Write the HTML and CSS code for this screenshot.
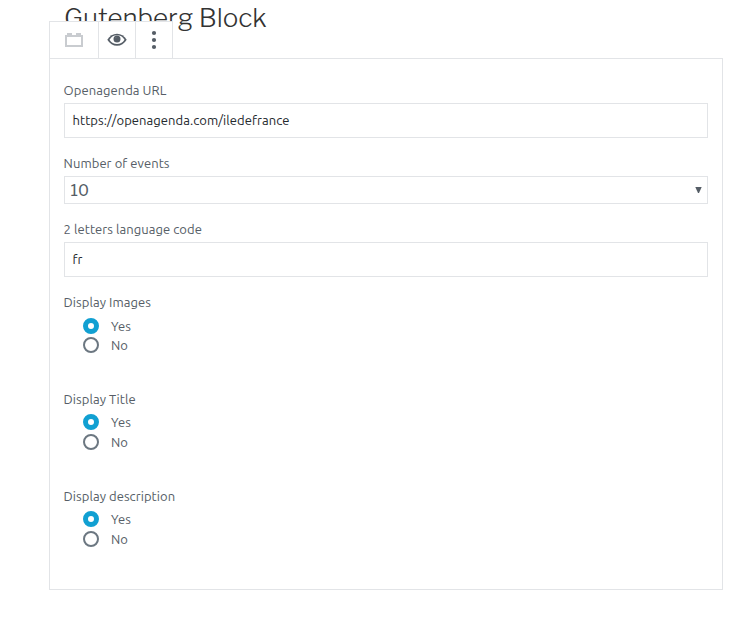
FILE: index.html
```html
<!DOCTYPE html>
<html lang="en">
<head>
<meta charset="utf-8">
<title>Gutenberg Block</title>
<link rel="stylesheet" href="styles.css">
</head>
<body>
<header class="heading"><h1>Gutenberg Block</h1></header>
<main class="block">
  <div class="toolbar">
    <span class="tool tool-block"><svg width="20" height="20" viewBox="0 0 20 20"><path d="M1 5h2V3h5v2h4V3h5v2h2v12H1V5zM3 7v8h14V7z" fill="#c9ccd0" fill-rule="evenodd"/></svg></span>
    <span class="tool"><svg width="20" height="20" viewBox="0 0 20 20"><path d="M.3 9.700Q4 3.700 10 3.700T19.700 9.700Q16 15.700 10 15.700T.3 9.700z" fill="#555d66"/><path d="M2.500 9.700Q5.300 5.300 10 5.300T17.500 9.700Q14.700 14.100 10 14.100T2.500 9.700z" fill="#fff"/><circle cx="10" cy="8.900" r="3.500" fill="#555d66"/><circle cx="8.900" cy="7.600" r=".8" fill="#69717a"/></svg></span>
    <span class="tool"><svg width="20" height="20" viewBox="0 0 20 20" fill="#555d66"><circle cx="10" cy="3" r="2.100"/><circle cx="10" cy="10" r="2.100"/><circle cx="10" cy="17" r="2.100"/></svg></span>
  </div>
  <div class="field">
    <div class="label">Openagenda URL</div>
    <div class="input">https://openagenda.com/iledefrance</div>
  </div>
  <div class="field">
    <div class="label">Number of events</div>
    <div class="select"><span>10</span><svg width="7" height="6" viewBox="0 0 7 6"><path d="M.3 0h6.400L4 6H3z" fill="#555d66"/></svg></div>
  </div>
  <div class="field">
    <div class="label">2 letters language code</div>
    <div class="input">fr</div>
  </div>
  <div class="group group-first">
    <div class="label">Display Images</div>
    <div class="option"><i class="radio on"></i><span>Yes</span></div>
    <div class="option"><i class="radio"></i><span>No</span></div>
  </div>
  <div class="group">
    <div class="label">Display Title</div>
    <div class="option"><i class="radio on"></i><span>Yes</span></div>
    <div class="option"><i class="radio"></i><span>No</span></div>
  </div>
  <div class="group">
    <div class="label">Display description</div>
    <div class="option"><i class="radio on"></i><span>Yes</span></div>
    <div class="option"><i class="radio"></i><span>No</span></div>
  </div>
</main>
</body>
</html>
```
FILE: styles.css
```css
* { box-sizing: border-box; }
body { margin: 0; background: #fff; color: #555d66; font: 13px/18px Ubuntu, "Noto Sans", sans-serif; letter-spacing: .06px; }
.heading { height: 58px; padding-left: 64px; }
h1 { margin: 0; font: 300 26px/35px "Libre Franklin", Inter, sans-serif; letter-spacing: -.03px; color: #333; white-space: nowrap; }
.block { position: relative; width: 674px; height: 532px; margin-left: 49px; padding: 22px 14px 0; border: 1px solid #e2e4e7; }
.toolbar { position: absolute; left: -1px; top: -38px; display: flex; height: 38px; background: #fff; border: 1px solid #e2e4e7; }
.tool { display: flex; width: 37px; align-items: center; justify-content: center; border-right: 1px solid #e2e4e7; }
.tool:last-child { width: 36px; border-right: 0; }
.tool-block { width: 49px; }
.field { margin-bottom: 16px; }
.label { height: 18px; margin-bottom: 4px; margin-left: -.4px; white-space: nowrap; }
.input { display: flex; align-items: center; height: 35px; padding: 0 7.5px 1px; border: 1px solid #e2e4e7; color: #23282d; }
.select { display: flex; align-items: center; justify-content: space-between; height: 28px; padding: 0 5px 0 5.600px; border: 1px solid #e2e4e7; font: 16px "Libre Franklin", sans-serif; }
.group { height: 97px; }
.group .label { margin-bottom: 4px; }
.group-first .label { margin-bottom: 5px; }
.option { display: flex; align-items: center; height: 20px; padding-left: 19px; gap: 12px; }
.group-first .option { height: 19px; }
.radio { width: 16px; height: 16px; border: 2px solid #6c7781; border-radius: 50%; }
.radio.on { border: 5px solid #11a0d2; }
```
